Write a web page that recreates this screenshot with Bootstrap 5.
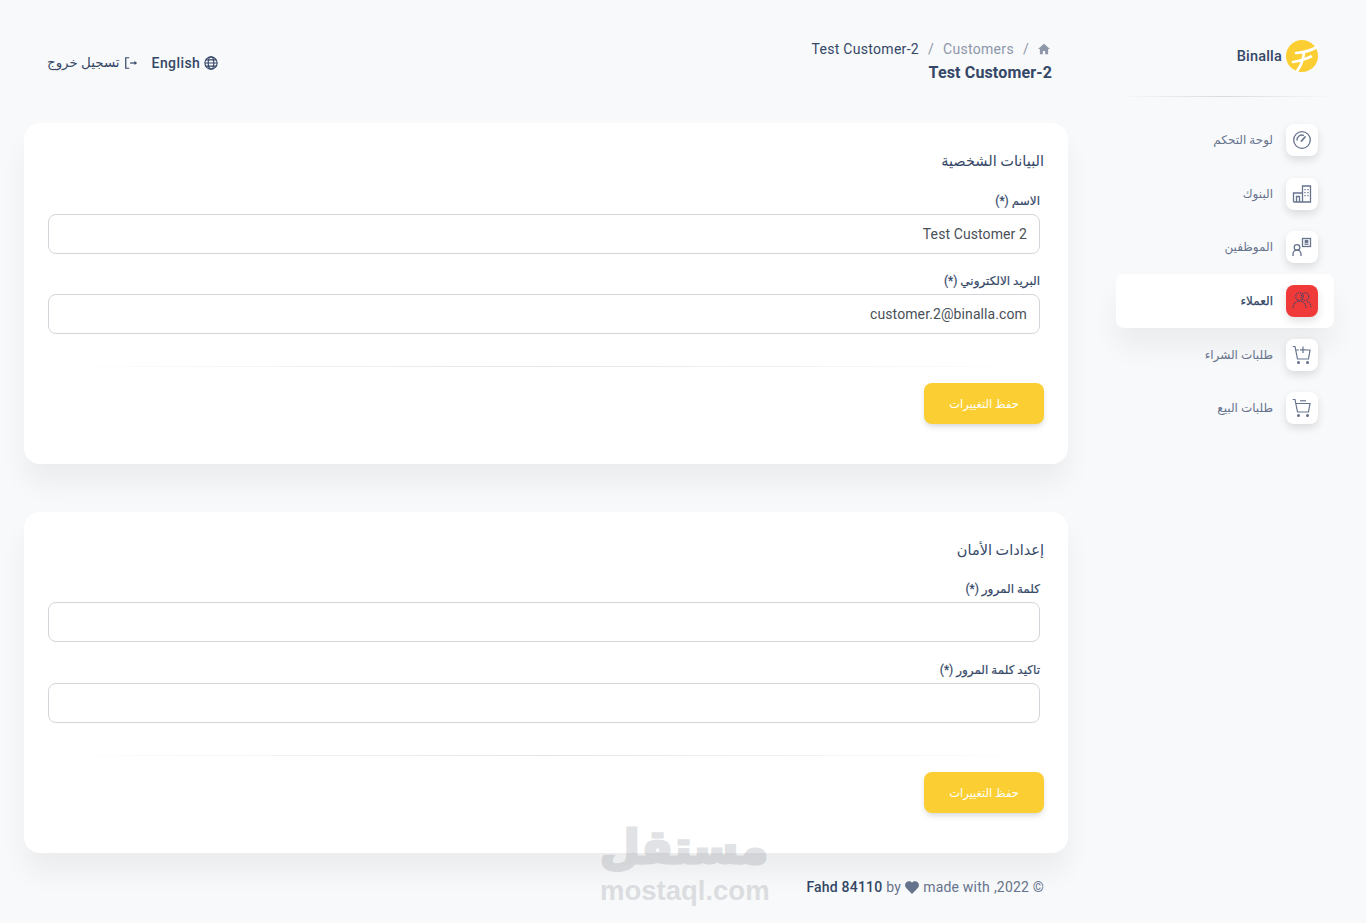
<!DOCTYPE html>
<html lang="ar" dir="rtl">
<head>
  <meta charset="UTF-8">
  <title>Test Customer-2</title>
  <link href="https://cdn.jsdelivr.net/npm/bootstrap@5.3.0/dist/css/bootstrap.min.css" rel="stylesheet">
  <style>
    body { background: #f8f9fa; color: #344767; font-family: Roboto, "DejaVu Sans", sans-serif; font-size: 14px; min-height: 923px; overflow: hidden; }
    .page-wrap { padding-right: 32px; padding-left: 24px; gap: 48px; }
    .side-col { width: 218px; flex-shrink: 0; }
    .brand-row { height: 96px; padding: 40px 16px 0 0; gap: 4px; font-weight: 500; font-size: 14.5px; letter-spacing: .2px; }
    .brand-logo { width: 32px; height: 32px; }
    .brand-name { margin-top: 6px; }
    .fade-line { height: 1px; background: linear-gradient(90deg, transparent, rgba(0,0,0,.12), transparent); }
    .side-menu { margin-top: 16px; }
    .side-item { height: 53.7px; padding-right: 16px; gap: 13px; color: #67748e; font-size: 12px; text-decoration: none; border-radius: 8px; }
    .side-item.is-active { background: #fff; color: #344767; font-size: 12px; -webkit-text-stroke: .25px #344767; box-shadow: 0 20px 27px rgba(0,0,0,.05); }
    .side-icon { width: 32px; height: 32px; border-radius: 8px; background: #fff; box-shadow: 0 4px 8px rgba(0,0,0,.12); }
    .is-active .side-icon { background: #f03a3a; }
    .main-col { width: 1044px; flex-shrink: 0; }
    .top-row { height: 123.2px; padding: 41px 16px 0 23px; }
    .crumb-line { font-size: 14px; line-height: 16px; color: #344767; letter-spacing: .3px; gap: 9px; padding-right: 2px; }
    .crumb-line .crumb-muted { color: #8d97a9; }
    .page-title { font-size: 16px; font-weight: 700; line-height: 20px; margin: 6px 0 0; letter-spacing: .15px; }
    .top-links { gap: 14px; padding-top: 2px; height: 42px; font-size: 14px; color: #344767; }
    .top-links .lang-name { font-weight: 500; letter-spacing: .4px; }
    .logout-name { font-size: 13.4px; }
    .panel { border: 0; border-radius: 16px; background: #fff; box-shadow: 0 20px 27px rgba(0,0,0,.05); height: 341px; padding: 24px; margin-bottom: 47.6px; }
    .panel-title { font-size: 14.5px; font-weight: 400; margin: 3px 0 18.6px; line-height: 24px; color: #344767; }
    .field-wrap { padding-right: 4px; margin-bottom: 19.4px; }
    .field-label { font-size: 12px; line-height: 16px; margin: 0 0 5px 0; display: block; color: #344767; -webkit-text-stroke: .2px #344767; }
    .form-control.field-input { height: 40px; border: 1px solid #d2d6da; border-radius: 8px; font-size: 14px; color: #495057; padding: 8px 12px; letter-spacing: .1px; background: #fff; }
    .panel .fade-line { margin: 12.4px 0 16px; background: linear-gradient(90deg, transparent, rgba(0,0,0,.1), transparent); }
    .save-btn { width: 120px; height: 41px; border: 0; border-radius: 8px; background: #fbcf33; color: #fff; font-size: 11.5px; box-shadow: 0 4px 7px -1px rgba(0,0,0,.11), 0 2px 4px -1px rgba(0,0,0,.07); }
    .save-btn:hover { background: #fbcf33; color: #fff; }
    .save-btn.p-0 { padding-top: 3px !important; }
    .foot-line { margin-top: -23px; padding-right: 24px; gap: 4px; color: #67748e; font-size: 14px; letter-spacing: .2px; line-height: 20px; }
    .foot-line b { color: #344767; font-weight: 500; }
    .stamp { position: absolute; left: 600px; top: 817px; width: 166px; text-align: center; color: #5f6473; opacity: .18; pointer-events: none; direction: ltr; }
    .stamp-ar { font-family: "DejaVu Sans", sans-serif; font-weight: 700; font-size: 46px; line-height: 61px; -webkit-text-stroke: 3px #5f6473; }
    .stamp-en { font-family: "Liberation Sans", sans-serif; font-weight: 700; font-size: 27.5px; line-height: 26px; }
  </style>
</head>
<body>
  <div class="page-wrap d-flex align-items-start">

    <!-- sidebar -->
    <aside class="side-col">
      <div class="brand-row d-flex align-items-start">
        <svg class="brand-logo" viewBox="0 0 32 32">
          <circle cx="16" cy="16" r="16" fill="#fbcf33"/>
          <path d="M10 13 C17 12.500 24 11 31 7 M7 22 C13 21 19 19.500 25 16.500 M18 13 C17 20 15 26 11 31" fill="none" stroke="#fff" stroke-width="2.600" stroke-linecap="round"/>
        </svg>
        <span class="brand-name">Binalla</span>
      </div>
      <div class="fade-line"></div>
      <nav class="side-menu d-flex flex-column">
        <a href="#" class="side-item d-flex align-items-center">
          <span class="side-icon d-flex align-items-center justify-content-center">
            <svg width="20" height="20" viewBox="0 0 20 20" fill="none" stroke="#67748e" stroke-width="1.300"><circle cx="10" cy="10" r="8.300"/><path d="M5 10.500a5 5 0 0 1 7-5"/><path d="M9.500 11l3.500-4" stroke-width="1.800" stroke-linecap="round"/></svg>
          </span>
          <span>لوحة التحكم</span>
        </a>
        <a href="#" class="side-item d-flex align-items-center">
          <span class="side-icon d-flex align-items-center justify-content-center">
            <svg width="20" height="20" viewBox="0 0 20 20" fill="none" stroke="#67748e" stroke-width="1.300"><path d="M1.500 18V9h9.500M10.500 18V2h8v16zM1.500 18h17M4.500 18v-5.500h3V18"/><path d="M13 5v8M16 5v8" stroke-dasharray="1.300 1.700"/></svg>
          </span>
          <span>البنوك</span>
        </a>
        <a href="#" class="side-item d-flex align-items-center">
          <span class="side-icon d-flex align-items-center justify-content-center">
            <svg width="20" height="20" viewBox="0 0 20 20" fill="none" stroke="#67748e" stroke-width="1.300"><circle cx="5" cy="10.500" r="2.800"/><path d="M1 19v-2a4 4 0 0 1 8 0v2"/><rect x="10.500" y="1.500" width="8" height="8"/><rect x="13.300" y="3.500" width="2.400" height="1.800" fill="#67748e"/><path d="M12.500 7.200h4"/></svg>
          </span>
          <span>الموظفين</span>
        </a>
        <a href="#" class="side-item is-active d-flex align-items-center">
          <span class="side-icon d-flex align-items-center justify-content-center">
            <svg width="20" height="20" viewBox="0 0 20 20" fill="none" stroke="#344767" stroke-width="1.100" stroke-dasharray="1.200 .8"><circle cx="7.500" cy="5.500" r="3.800"/><circle cx="13" cy="5.500" r="3.800"/><path d="M1 17c0-4 3-7 6.500-7s6.500 3 6.500 7M15 10.500c2.500.7 4 3.200 4 6"/></svg>
          </span>
          <span>العملاء</span>
        </a>
        <a href="#" class="side-item d-flex align-items-center">
          <span class="side-icon d-flex align-items-center justify-content-center">
            <svg width="20" height="20" viewBox="0 0 20 20" fill="none" stroke="#67748e" stroke-width="1.200"><path d="M.7 1.500h2.300l2.500 12.500h11l1.500-9h-4M3.700 5h3.300"/><path d="M11 1.500v6.500M8 4.800h6"/><circle cx="6.500" cy="17.500" r=".9" fill="#67748e"/><circle cx="15.500" cy="17.500" r=".9" fill="#67748e"/></svg>
          </span>
          <span>طلبات الشراء</span>
        </a>
        <a href="#" class="side-item d-flex align-items-center">
          <span class="side-icon d-flex align-items-center justify-content-center">
            <svg width="20" height="20" viewBox="0 0 20 20" fill="none" stroke="#67748e" stroke-width="1.200"><path d="M.7 1.500h2.300l2.500 12.500h11l1.500-8.500H3.800"/><path d="M8 2.800h6"/><circle cx="6.500" cy="17.500" r=".9" fill="#67748e"/><circle cx="15.500" cy="17.500" r=".9" fill="#67748e"/></svg>
          </span>
          <span>طلبات البيع</span>
        </a>
      </nav>
    </aside>

    <!-- main -->
    <main class="main-col">
      <div class="top-row d-flex justify-content-between align-items-start">
        <div>
          <div class="crumb-line d-flex align-items-center">
            <svg width="12" height="12" viewBox="0 0 16 16" fill="#8d97a9"><path d="M8 1 0 8h2.500v7H6.500v-4.500h3V15h4V8H16z"/></svg>
            <span class="crumb-muted">/</span>
            <span class="crumb-muted">Customers</span>
            <span class="crumb-muted">/</span>
            <span>Test Customer-2</span>
          </div>
          <h6 class="page-title">Test Customer-2</h6>
        </div>
        <div class="top-links d-flex align-items-center">
          <span class="d-flex align-items-center gap-1">
            <svg width="14" height="14" viewBox="0 0 16 16" fill="none" stroke="#344767" stroke-width="1.300"><circle cx="8" cy="8" r="7"/><ellipse cx="8" cy="8" rx="3.200" ry="7"/><path d="M1 8h14M2 4.500h12M2 11.500h12"/></svg>
            <span class="lang-name">English</span>
          </span>
          <span class="d-flex align-items-center gap-1">
            <svg width="14" height="14" viewBox="0 0 16 16" fill="none" stroke="#344767" stroke-width="1.400"><path d="M6 2H2v12h4"/><path d="M7 8h6"/><path d="M12 5.800 15 8 12 10.200z" fill="#344767" stroke="none"/></svg>
            <span class="logout-name">تسجيل خروج</span>
          </span>
        </div>
      </div>

      <section class="card panel">
        <h6 class="panel-title">البيانات الشخصية</h6>
        <div class="field-wrap">
          <label class="field-label">الاسم (*)</label>
          <input class="form-control field-input" type="text" value="Test Customer 2">
        </div>
        <div class="field-wrap">
          <label class="field-label">البريد الالكتروني (*)</label>
          <input class="form-control field-input" type="text" value="customer.2@binalla.com">
        </div>
        <div class="fade-line"></div>
        <div><button type="button" class="btn save-btn p-0">حفظ التغييرات</button></div>
      </section>

      <section class="card panel">
        <h6 class="panel-title">إعدادات الأمان</h6>
        <div class="field-wrap">
          <label class="field-label">كلمة المرور (*)</label>
          <input class="form-control field-input" type="password">
        </div>
        <div class="field-wrap">
          <label class="field-label">تاكيد كلمة المرور (*)</label>
          <input class="form-control field-input" type="password">
        </div>
        <div class="fade-line"></div>
        <div><button type="button" class="btn save-btn p-0">حفظ التغييرات</button></div>
      </section>

      <div class="foot-line d-flex align-items-center">
        <span>© 2022,</span>
        <span>made with</span>
        <svg width="14" height="13" viewBox="0 0 16 15" fill="#67748e"><path d="M8 15 1.300 8.200C-.5 6.300-.4 3.200 1.500 1.500 3.400-.2 6.300 0 8 2c1.700-2 4.600-2.200 6.500-.5 1.900 1.700 2 4.800.2 6.700z"/></svg>
        <span>by</span>
        <b>Fahd 84110</b>
      </div>
    </main>
  </div>

  <div class="stamp">
    <div class="stamp-ar">مستقل</div>
    <div class="stamp-en">mostaql.com</div>
  </div>

  <script src="https://cdn.jsdelivr.net/npm/bootstrap@5.3.0/dist/js/bootstrap.bundle.min.js"></script>
</body>
</html>
